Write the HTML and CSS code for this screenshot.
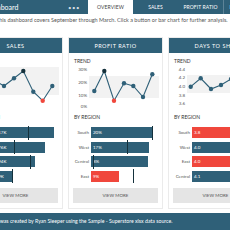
FILE: index.html
```html
<!DOCTYPE html>
<html>
<head>
<meta charset="utf-8">
<link rel="stylesheet" href="styles.css">
</head>
<body>
<div class="page">
  <header class="topbar">
    <div class="title"><span class="title-text">Dashboard</span><span class="dots">•••</span></div>
    <nav class="tabs">
      <div class="tab active">OVERVIEW</div>
      <div class="tab">SALES</div>
      <div class="tab">PROFIT RATIO</div>
      <div class="tab">DAYS TO SHIP</div>
    </nav>
  </header>
  <p class="desc">This dashboard covers September through March. Click a button or bar chart for further analysis.</p>
  <main class="cards">
    <section class="card">
      <h2 class="card-head">SALES</h2>
      <div class="sec-label">TREND</div>
      <svg class="trend" viewBox="0 0 93 46" width="93" height="46">
        <rect class="band" x="20" y="3" width="70" height="28"/>
        <text class="axis" x="18" y="8" text-anchor="end">$60K</text>
        <text class="axis" x="18" y="22" text-anchor="end">$40K</text>
        <text class="axis" x="18" y="36" text-anchor="end">$20K</text>
        <polyline class="line" points="25.3,16 35,22 45,14.3 54.3,7 64.3,27.7 73.7,36.7 83.3,22"/>
        <circle class="pt" cx="25.3" cy="16" r="2.2"/>
        <circle class="pt" cx="35" cy="22" r="2.2"/>
        <circle class="pt" cx="45" cy="14.3" r="2.2"/>
        <circle class="pt max" cx="54.3" cy="7" r="2.2"/>
        <circle class="pt" cx="64.3" cy="27.7" r="2.2"/>
        <circle class="pt min" cx="73.7" cy="36.7" r="2.2"/>
        <circle class="pt" cx="83.3" cy="22" r="2.2"/>
      </svg>
      <div class="sec-label region">BY REGION</div>
      <div class="bars">
        <div class="row"><span class="rlabel">West</span><div class="track"><div class="bar" style="width:63px">$317K</div><i class="ref" style="left:37px"></i></div></div>
        <div class="row"><span class="rlabel">East</span><div class="track"><div class="bar" style="width:54px">$276K</div><i class="ref" style="left:23px"></i></div></div>
        <div class="row"><span class="rlabel">Central</span><div class="track"><div class="bar" style="width:44px">$194K</div><i class="ref" style="left:39px"></i></div></div>
        <div class="row"><span class="rlabel">South</span><div class="track"><div class="bar" style="width:22px">$99K</div><i class="ref" style="left:21px"></i></div></div>
      </div>
      <button class="more">VIEW MORE</button>
    </section>

    <section class="card">
      <h2 class="card-head">PROFIT RATIO</h2>
      <div class="sec-label">TREND</div>
      <svg class="trend" viewBox="0 0 93 46" width="93" height="46">
        <rect class="band" x="20" y="12" width="70" height="22"/>
        <text class="axis" x="18" y="6.7" text-anchor="end">30%</text>
        <text class="axis" x="18" y="19.7" text-anchor="end">20%</text>
        <text class="axis" x="18" y="32.7" text-anchor="end">10%</text>
        <text class="axis" x="18" y="43.5" text-anchor="end">0%</text>
        <polyline class="line" points="25.3,27 35.3,7 45,36.7 55,19.3 64.3,22 74,33 83.3,10.3"/>
        <circle class="pt" cx="25.3" cy="27" r="2.2"/>
        <circle class="pt max" cx="35.3" cy="7" r="2.2"/>
        <circle class="pt min" cx="45" cy="36.7" r="2.2"/>
        <circle class="pt" cx="55" cy="19.3" r="2.2"/>
        <circle class="pt" cx="64.3" cy="22" r="2.2"/>
        <circle class="pt" cx="74" cy="33" r="2.2"/>
        <circle class="pt" cx="83.3" cy="10.3" r="2.2"/>
      </svg>
      <div class="sec-label region">BY REGION</div>
      <div class="bars">
        <div class="row"><span class="rlabel">South</span><div class="track"><div class="bar" style="width:62px">20%</div><i class="ref" style="left:61px"></i></div></div>
        <div class="row"><span class="rlabel">West</span><div class="track"><div class="bar" style="width:58px">17%</div><i class="ref" style="left:36px"></i></div></div>
        <div class="row"><span class="rlabel">Central</span><div class="track"><div class="bar" style="width:57px">8%</div><i class="ref" style="left:2px"></i></div></div>
        <div class="row"><span class="rlabel">East</span><div class="track"><div class="bar neg" style="width:28px">9%</div><i class="ref" style="left:42px"></i></div></div>
      </div>
      <button class="more">VIEW MORE</button>
    </section>

    <section class="card">
      <h2 class="card-head">DAYS TO SHIP</h2>
      <div class="sec-label">TREND</div>
      <svg class="trend" viewBox="0 0 93 46" width="93" height="46">
        <rect class="band" x="18" y="11" width="72" height="18"/>
        <text class="axis" x="16" y="6.6" text-anchor="end">4.4</text>
        <text class="axis" x="16" y="15.3" text-anchor="end">4.2</text>
        <text class="axis" x="16" y="24.3" text-anchor="end">4.0</text>
        <text class="axis" x="16" y="32.6" text-anchor="end">3.8</text>
        <text class="axis" x="16" y="40.9" text-anchor="end">3.6</text>
        <polyline class="line" points="21.7,22.7 31.7,14.3 42,25 52,21 62,15 72,24 82,18"/>
        <circle class="pt" cx="21.7" cy="22.7" r="2.2"/>
        <circle class="pt" cx="31.7" cy="14.3" r="2.2"/>
        <circle class="pt" cx="42" cy="25" r="2.2"/>
        <circle class="pt" cx="52" cy="21" r="2.2"/>
        <circle class="pt" cx="62" cy="15" r="2.2"/>
        <circle class="pt" cx="72" cy="24" r="2.2"/>
        <circle class="pt" cx="82" cy="18" r="2.2"/>
      </svg>
      <div class="sec-label region">BY REGION</div>
      <div class="bars wide">
        <div class="row"><span class="rlabel">South</span><div class="track"><div class="bar neg" style="width:62px">3.8</div></div></div>
        <div class="row"><span class="rlabel">West</span><div class="track"><div class="bar" style="width:64px">4.0</div></div></div>
        <div class="row"><span class="rlabel">East</span><div class="track"><div class="bar neg" style="width:64px">4.0</div></div></div>
        <div class="row"><span class="rlabel">Central</span><div class="track"><div class="bar" style="width:66px">4.1</div></div></div>
      </div>
      <button class="more">VIEW MORE</button>
    </section>
  </main>
  <footer class="footer">This dashboard was created by Ryan Sleeper using the Sample - Superstore xlsx data source.</footer>
</div>
</body>
</html>
```

FILE: styles.css
```css
html, body {
  margin: 0;
  padding: 0;
}
body {
  width: 230px;
  height: 230px;
  overflow: hidden;
  background: #ffffff;
  font-family: Lato, "Open Sans", sans-serif;
  color: #444;
}
.page {
  width: 230px;
}
.topbar {
  display: flex;
  height: 14px;
}
.title {
  flex: none;
  width: 108px;
  margin-left: -20px;
  box-sizing: border-box;
  padding: 0 8px 0 5px;
  background: #2f6078;
  color: #fff;
  display: flex;
  align-items: center;
  justify-content: space-between;
  font-size: 7px;
}
.dots {
  font-size: 6px;
  letter-spacing: 0.5px;
  color: #d8dfe3;
}
.tabs {
  flex: none;
  display: flex;
}
.tab {
  flex: none;
  width: 45px;
  height: 14px;
  background: #2f6078;
  color: #fff;
  font-size: 5px;
  letter-spacing: 0.1px;
  display: flex;
  align-items: center;
  justify-content: center;
  white-space: nowrap;
}
.tab + .tab + .tab + .tab {
  border-left: 1px solid #5d8397;
}
.tab.active {
  background: #fff;
  color: #444;
}
.desc {
  margin: 3px 0 14px -4px;
  font-size: 5.5px;
  line-height: 7px;
  color: #555;
  white-space: nowrap;
}
.cards {
  display: flex;
  gap: 7px;
  margin-left: -31px;
}
.card {
  flex: none;
  width: 93px;
  background: #fff;
  box-shadow: 0 0 0 1px #ebebeb;
  padding-bottom: 5px;
}
.card-head {
  margin: 0;
  height: 15px;
  background: #2f6078;
  color: #fff;
  font-size: 5.5px;
  font-weight: normal;
  letter-spacing: 0.5px;
  display: flex;
  align-items: center;
  justify-content: center;
}
.sec-label {
  margin-top: 5px;
  padding-left: 5px;
  height: 6px;
  line-height: 6px;
  font-size: 5px;
  color: #333;
}
.sec-label.region {
  margin-top: 4px;
}
.trend {
  display: block;
}
.band {
  fill: #f2f2f2;
}
.axis {
  font-size: 4.5px;
  fill: #555;
  font-family: Lato, "Open Sans", sans-serif;
}
.line {
  fill: none;
  stroke: #2f6078;
  stroke-width: 1.1;
}
.pt {
  fill: #2f6078;
}
.pt.max {
  fill: #15313c;
}
.pt.min {
  fill: #f0473c;
}
.bars {
  margin-top: 7px;
  display: grid;
  row-gap: 3.5px;
}
.row {
  display: grid;
  grid-template-columns: 22px 68px;
  height: 11px;
}
.bars.wide .row {
  grid-template-columns: 23px 68px;
}
.rlabel {
  font-size: 4.5px;
  line-height: 11px;
  color: #555;
  text-align: right;
  padding-right: 2px;
}
.track {
  position: relative;
}
.bar {
  height: 11px;
  box-sizing: border-box;
  padding-left: 2px;
  background: #2f6078;
  color: #fff;
  font-size: 4.5px;
  line-height: 11px;
  white-space: nowrap;
}
.bar.neg {
  background: #f0473c;
}
.ref {
  position: absolute;
  top: -1.5px;
  bottom: -1.5px;
  width: 1px;
  background: #15313c;
}
.more {
  display: block;
  margin: 6px 4px 0;
  width: 85px;
  height: 15px;
  padding: 0;
  border: 0;
  background: #e5e5e5;
  color: #555;
  font-family: inherit;
  font-size: 4.5px;
}
.footer {
  margin-top: 5px;
  margin-left: -36px;
  height: 17px;
  background: #2f6078;
  color: #fff;
  font-size: 5.2px;
  line-height: 17px;
  white-space: nowrap;
  width: 300px;
}
```
